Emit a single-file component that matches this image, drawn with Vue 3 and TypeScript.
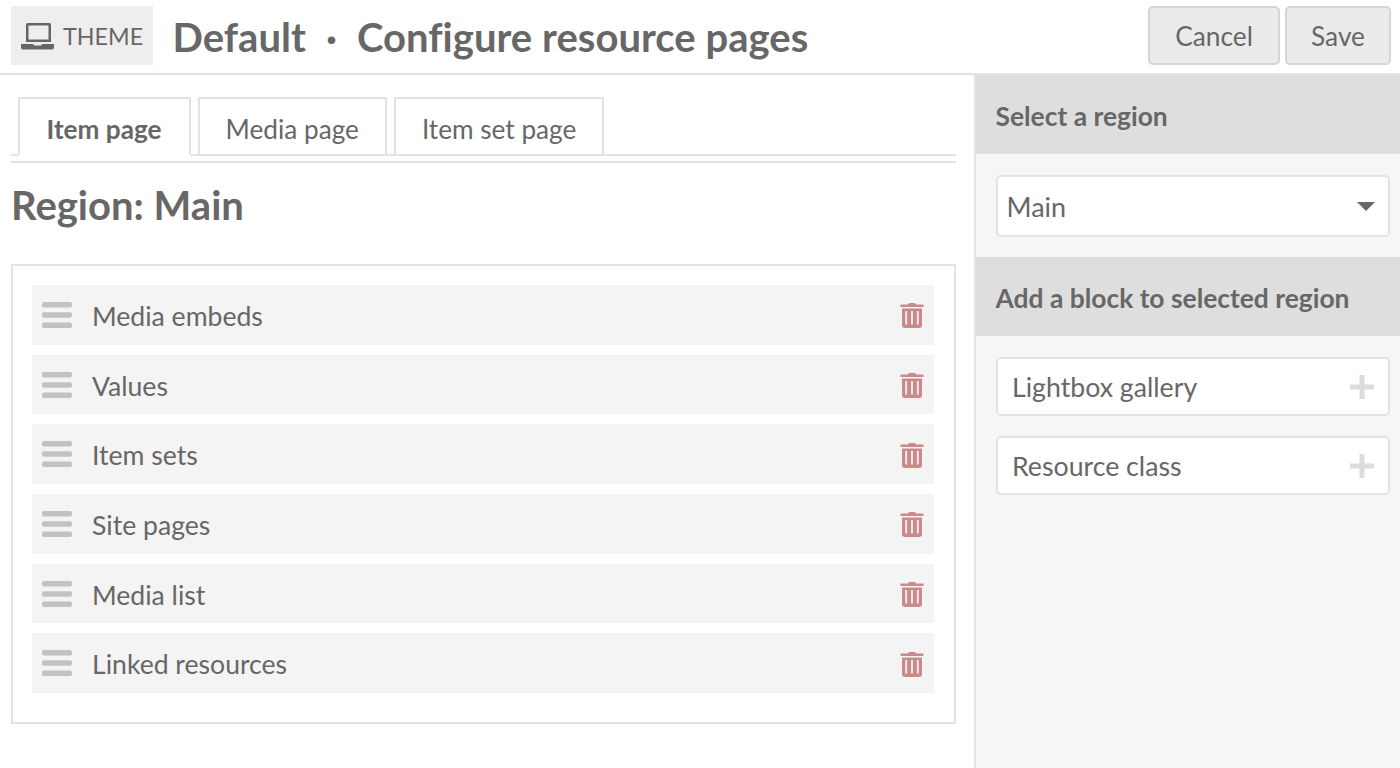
<script setup lang="ts">
const tabs: string[] = ['Item page', 'Media page', 'Item set page']
const blocks: string[] = ['Media embeds', 'Values', 'Item sets', 'Site pages', 'Media list', 'Linked resources']
const addable: string[] = ['Lightbox gallery', 'Resource class']
</script>

<template>
  <div class="page">
    <header class="top">
      <div class="badge">
        <svg class="laptop" width="35" height="28" viewBox="0 0 35 28">
          <path d="M6 2.500A1.500 1.500 0 0 1 7.500 1h22A1.500 1.500 0 0 1 31 2.500V20H6Zm2.500 1V17.500h20V3.500Z" fill="#666" fill-rule="evenodd" />
          <path d="M1 22h12l1 1.500h7l1-1.500h12v3.500a2 2 0 0 1-2 2H3a2 2 0 0 1-2-2Z" fill="#666" />
        </svg>
        <span>THEME</span>
      </div>
      <h1>Default<span class="dot">·</span>Configure resource pages</h1>
      <div class="actions">
        <button class="btn cancel">Cancel</button>
        <button class="btn save">Save</button>
      </div>
    </header>
    <div class="body">
      <main class="main">
        <nav class="tabs">
          <div v-for="(t, i) in tabs" :key="t" class="tab" :class="{ active: i === 0 }">{{ t }}</div>
        </nav>
        <h2>Region: Main</h2>
        <section class="blocks">
          <div v-for="b in blocks" :key="b" class="row">
            <svg class="grip" width="30" height="26" viewBox="0 0 30 26">
              <rect y="0" width="30" height="5.500" rx="2" fill="#c2c2c2" />
              <rect y="10.300" width="30" height="5.500" rx="2" fill="#c2c2c2" />
              <rect y="20.500" width="30" height="5.500" rx="2" fill="#c2c2c2" />
            </svg>
            <span class="label">{{ b }}</span>
            <svg class="trash" width="24" height="27" viewBox="0 0 24 27">
              <path d="M0.500 3.500h7.500l1-1.500h6l1 1.500h7.500v2.500H0.500Z" fill="#cb8a8a" />
              <path d="M2 7.500h20V24a3 3 0 0 1-3 3H5a3 3 0 0 1-3-3Zm3.300 2.500v13.500h1.800V10Zm5.800 0v13.500h1.800V10Zm5.800 0v13.500h1.800V10Z" fill="#cb8a8a" fill-rule="evenodd" />
            </svg>
          </div>
        </section>
      </main>
      <aside class="side">
        <div class="side-title">Select a region</div>
        <div class="side-pad select-pad">
          <div class="select">
            <span>Main</span>
            <i class="caret"></i>
          </div>
        </div>
        <div class="side-title">Add a block to selected region</div>
        <div class="side-pad add-list">
          <div v-for="a in addable" :key="a" class="add">
            <span>{{ a }}</span>
            <svg width="24" height="24" viewBox="0 0 24 24">
              <path d="M9.500 0h5v9.500H24v5h-9.500V24h-5v-9.500H0v-5h9.500Z" fill="#dcdcdc" />
            </svg>
          </div>
        </div>
      </aside>
    </div>
  </div>
</template>

<style>
html, body { margin: 0; background: #fff; }
</style>

<style scoped>
.page {
  width: 1400px;
  height: 768px;
  overflow: hidden;
  display: flex;
  flex-direction: column;
  font-family: Lato, "Liberation Sans", sans-serif;
  color: #676767;
  background: #fff;
}
.top {
  height: 75px;
  box-sizing: border-box;
  flex: none;
  display: flex;
  align-items: flex-start;
  border-bottom: 2px solid #e3e3e3;
  padding: 6px 9px 0 11px;
}
.badge {
  width: 142px;
  height: 59px;
  background: #eee;
  display: flex;
  align-items: center;
  box-sizing: border-box;
  padding-left: 9px;
  font-size: 23.300px;
  gap: 8px;
}
h1 {
  margin: 0 0 0 19.500px;
  font-size: 40px;
  line-height: 62px;
  font-weight: 700;
  white-space: nowrap;
  letter-spacing: 0.03px;
}
.dot { display: inline-block; width: 51px; text-align: center; }
.actions { margin-left: auto; display: flex; gap: 5px; }
.btn {
  height: 59px;
  background: #ebebeb;
  border: 2px solid #d5d5d5;
  border-radius: 5px;
  color: #676767;
  font: 400 26.300px Lato, sans-serif;
  padding: 0;
}
.cancel { width: 132px; }
.save { width: 106px; }
.body { flex: 1; display: flex; min-height: 0; }
.main { flex: none; box-sizing: border-box; width: 976px; padding: 22px 18px 0 11px; border-right: 2px solid #e3e3e3; }
.tabs {
  height: 66px;
  box-sizing: border-box;
  display: flex;
  gap: 7px;
  padding-left: 6.500px;
  border-bottom: 2px solid #e3e3e3;
  box-shadow: inset 0 -5px 0 #fff, inset 0 -7px 0 #e3e3e3;
}
.tab {
  height: 55px;
  box-sizing: content-box;
  border: 2px solid #e3e3e3;
  font-size: 26.200px;
  line-height: 60px;
  padding: 0 26px;
  background: #fff;
}
.tab.active { font-weight: 700; border-bottom-color: #fff; padding: 0 27px; }
h2 { margin: 17px 0 34px; font-size: 40px; line-height: 50px; font-weight: 700; }
.blocks {
  height: 460px;
  box-sizing: border-box;
  border: 2px solid #e3e3e3;
  padding: 19px 20px 19px 19px;
  display: flex;
  flex-direction: column;
  gap: 10px;
}
.row {
  height: 59.700px;
  flex: none;
  background: #f4f4f4;
  display: flex;
  align-items: center;
  padding: 0 10px;
  font-size: 26.600px;
}
.grip { flex: none; }
.label { margin: 2px 0 0 20px; flex: 1; }
.trash { flex: none; }
.side { flex: 1; background: #f6f6f6; }
.side-title {
  height: 79px;
  background: #dedede;
  box-sizing: border-box;
  padding-left: 19.500px;
  font-size: 26.400px;
  font-weight: 700;
  line-height: 82px;
}
.side-pad { padding: 21px 10px 0 19.500px; }
.select-pad { height: 103px; box-sizing: border-box; }
.select, .add {
  box-sizing: border-box;
  background: #fff;
  border: 2px solid #e3e3e3;
  border-radius: 5px;
  display: flex;
  align-items: center;
  justify-content: space-between;
  font-size: 26.700px;
}
.select { height: 62px; padding: 0 13px 0 9px; font-size: 27px; }
.caret { width: 0; height: 0; border: 9px solid transparent; border-top: 9px solid #666; border-bottom: 0; }
.add-list { display: flex; flex-direction: column; gap: 20px; }
.add { height: 59px; padding: 0 14px 0 14.500px; }
</style>
